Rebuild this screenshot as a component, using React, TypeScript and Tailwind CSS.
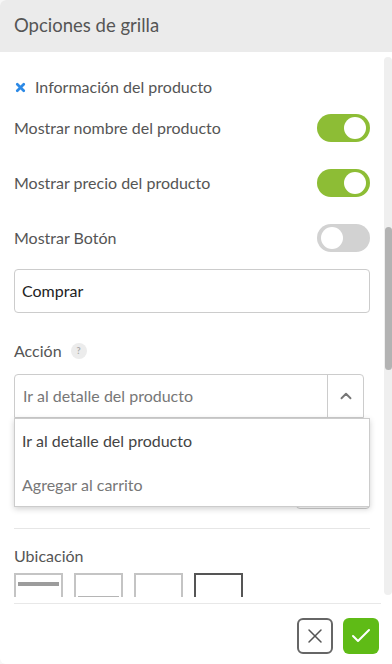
import { Check, X, ChevronUp } from "lucide-react";

function Toggle({ on }: { on: boolean }) {
  return (
    <div
      className={`w-[53px] h-[28px] rounded-full flex items-center px-[4px] ${
        on ? "bg-[#8dbd35] justify-end" : "bg-[#d2d2d2] justify-start"
      }`}
    >
      <div className="w-[22px] h-[22px] rounded-full bg-white" />
    </div>
  );
}

function Row({ label, on }: { label: string; on: boolean }) {
  return (
    <div className="flex items-center justify-between h-[28px]">
      <span className="text-[16px] text-[#555]">{label}</span>
      <Toggle on={on} />
    </div>
  );
}

export default function App() {
  return (
    <div className="w-[392px] h-[664px] bg-[#f7f7f7] font-['Lato',sans-serif]">
      <div className="h-full bg-white rounded-l-md overflow-hidden flex flex-col">
        {/* Header */}
        <div className="h-[52px] bg-[#ebebeb] flex items-center px-[14px] shrink-0">
          <h1 className="text-[18.5px] text-[#555]">Opciones de grilla</h1>
        </div>

        {/* Scroll area */}
        <div className="relative h-[545px] overflow-hidden shrink-0">
          <div className="pl-[14px] pr-[22px] pt-[26px]">
            <div className="flex items-center gap-[8px] h-[18px]">
              <X className="w-[13px] h-[13px] text-[#2d8ae6]" strokeWidth={5} />
              <span className="text-[16px] text-[#555]">Información del producto</span>
            </div>

            <div className="mt-[18px] flex flex-col gap-[27px]">
              <Row label="Mostrar nombre del producto" on />
              <Row label="Mostrar precio del producto" on />
              <Row label="Mostrar Botón" on={false} />
            </div>

            <div className="mt-[17px] h-[44px] border border-[#ccc] rounded-[4px] flex items-center px-[7px] text-[16px] text-[#222]">
              Comprar
            </div>

            <div className="mt-[28px] flex items-center gap-[9px] h-[20px]">
              <span className="text-[16px] text-[#555]">Acción</span>
              <span className="w-[16px] h-[16px] rounded-full bg-[#ececec] text-[#aaa] text-[9px] font-bold flex items-center justify-center">
                ?
              </span>
            </div>

            <div className="relative mt-[13px]">
              <div className="w-[350px] h-[44px] border border-[#ccc] rounded-t-[4px] flex items-center">
                <span className="flex-1 pl-[8px] text-[16px] text-[#777]">Ir al detalle del producto</span>
                <div className="w-[36px] h-full border-l border-[#ccc] flex items-center justify-center">
                  <ChevronUp className="w-[18px] h-[18px] text-[#777]" strokeWidth={2.5} />
                </div>
              </div>

              <div className="flex justify-end mt-[57px]">
                <div className="w-[74px] h-[34px] border border-[#ccc] rounded-[4px]" />
              </div>

              {/* Dropdown menu */}
              <div className="absolute left-0 top-[44px] w-[356px] bg-white border border-[#ccc] shadow-[0_2px_6px_rgba(0,0,0,0.18)] z-10">
                <div className="h-[44px] flex items-center px-[7px] text-[16px] font-normal text-[#444]">
                  Ir al detalle del producto
                </div>
                <div className="h-[43px] flex items-center px-[7px] text-[16px] text-[#777]">
                  Agregar al carrito
                </div>
              </div>
            </div>

            <div className="mt-[19px] border-t border-[#e6e6e6]" />

            <div className="mt-[17px] text-[16px] text-[#555] h-[20px] flex items-center">Ubicación</div>

            <div className="mt-[7px] flex gap-[11px]">
              <div className="w-[49px] h-[40px] border-2 border-[#c4c4c4] p-[2px]">
                <div className="h-[4px] bg-[#9c9c9c] mt-[5px]" />
              </div>
              <div className="w-[49px] h-[40px] border-2 border-[#c4c4c4] flex flex-col justify-start px-[2px]">
                <div className="h-[2px] bg-[#b5b5b5] mt-[21px]" />
              </div>
              <div className="w-[49px] h-[40px] border-2 border-[#c4c4c4]" />
              <div className="w-[49px] h-[40px] border-2 border-[#555]" />
            </div>
          </div>

          {/* Scrollbar */}
          <div className="absolute right-0 top-[5px] bottom-[2px] w-[8px] bg-[#efefef] rounded-t-[6px] rounded-b-[6px]">
            <div className="absolute left-[1px] right-0 top-[170px] h-[143px] bg-[#b3b3b3] rounded-[5px]" />
          </div>
        </div>

        {/* Footer */}
        <div className="mx-[14px] mr-[11px] mt-[6px] border-t border-[#e8e8e8]" />
        <div className="flex justify-end gap-[10px] pr-[13px] pt-[14px]">
          <button className="w-[36px] h-[36px] rounded-[6px] border-2 border-[#666] flex items-center justify-center">
            <X className="w-[24px] h-[24px] text-[#555]" strokeWidth={1.5} />
          </button>
          <button className="w-[36px] h-[36px] rounded-[6px] bg-[#5fbb16] flex items-center justify-center">
            <Check className="w-[24px] h-[24px] text-white" strokeWidth={2} />
          </button>
        </div>
      </div>
    </div>
  );
}
